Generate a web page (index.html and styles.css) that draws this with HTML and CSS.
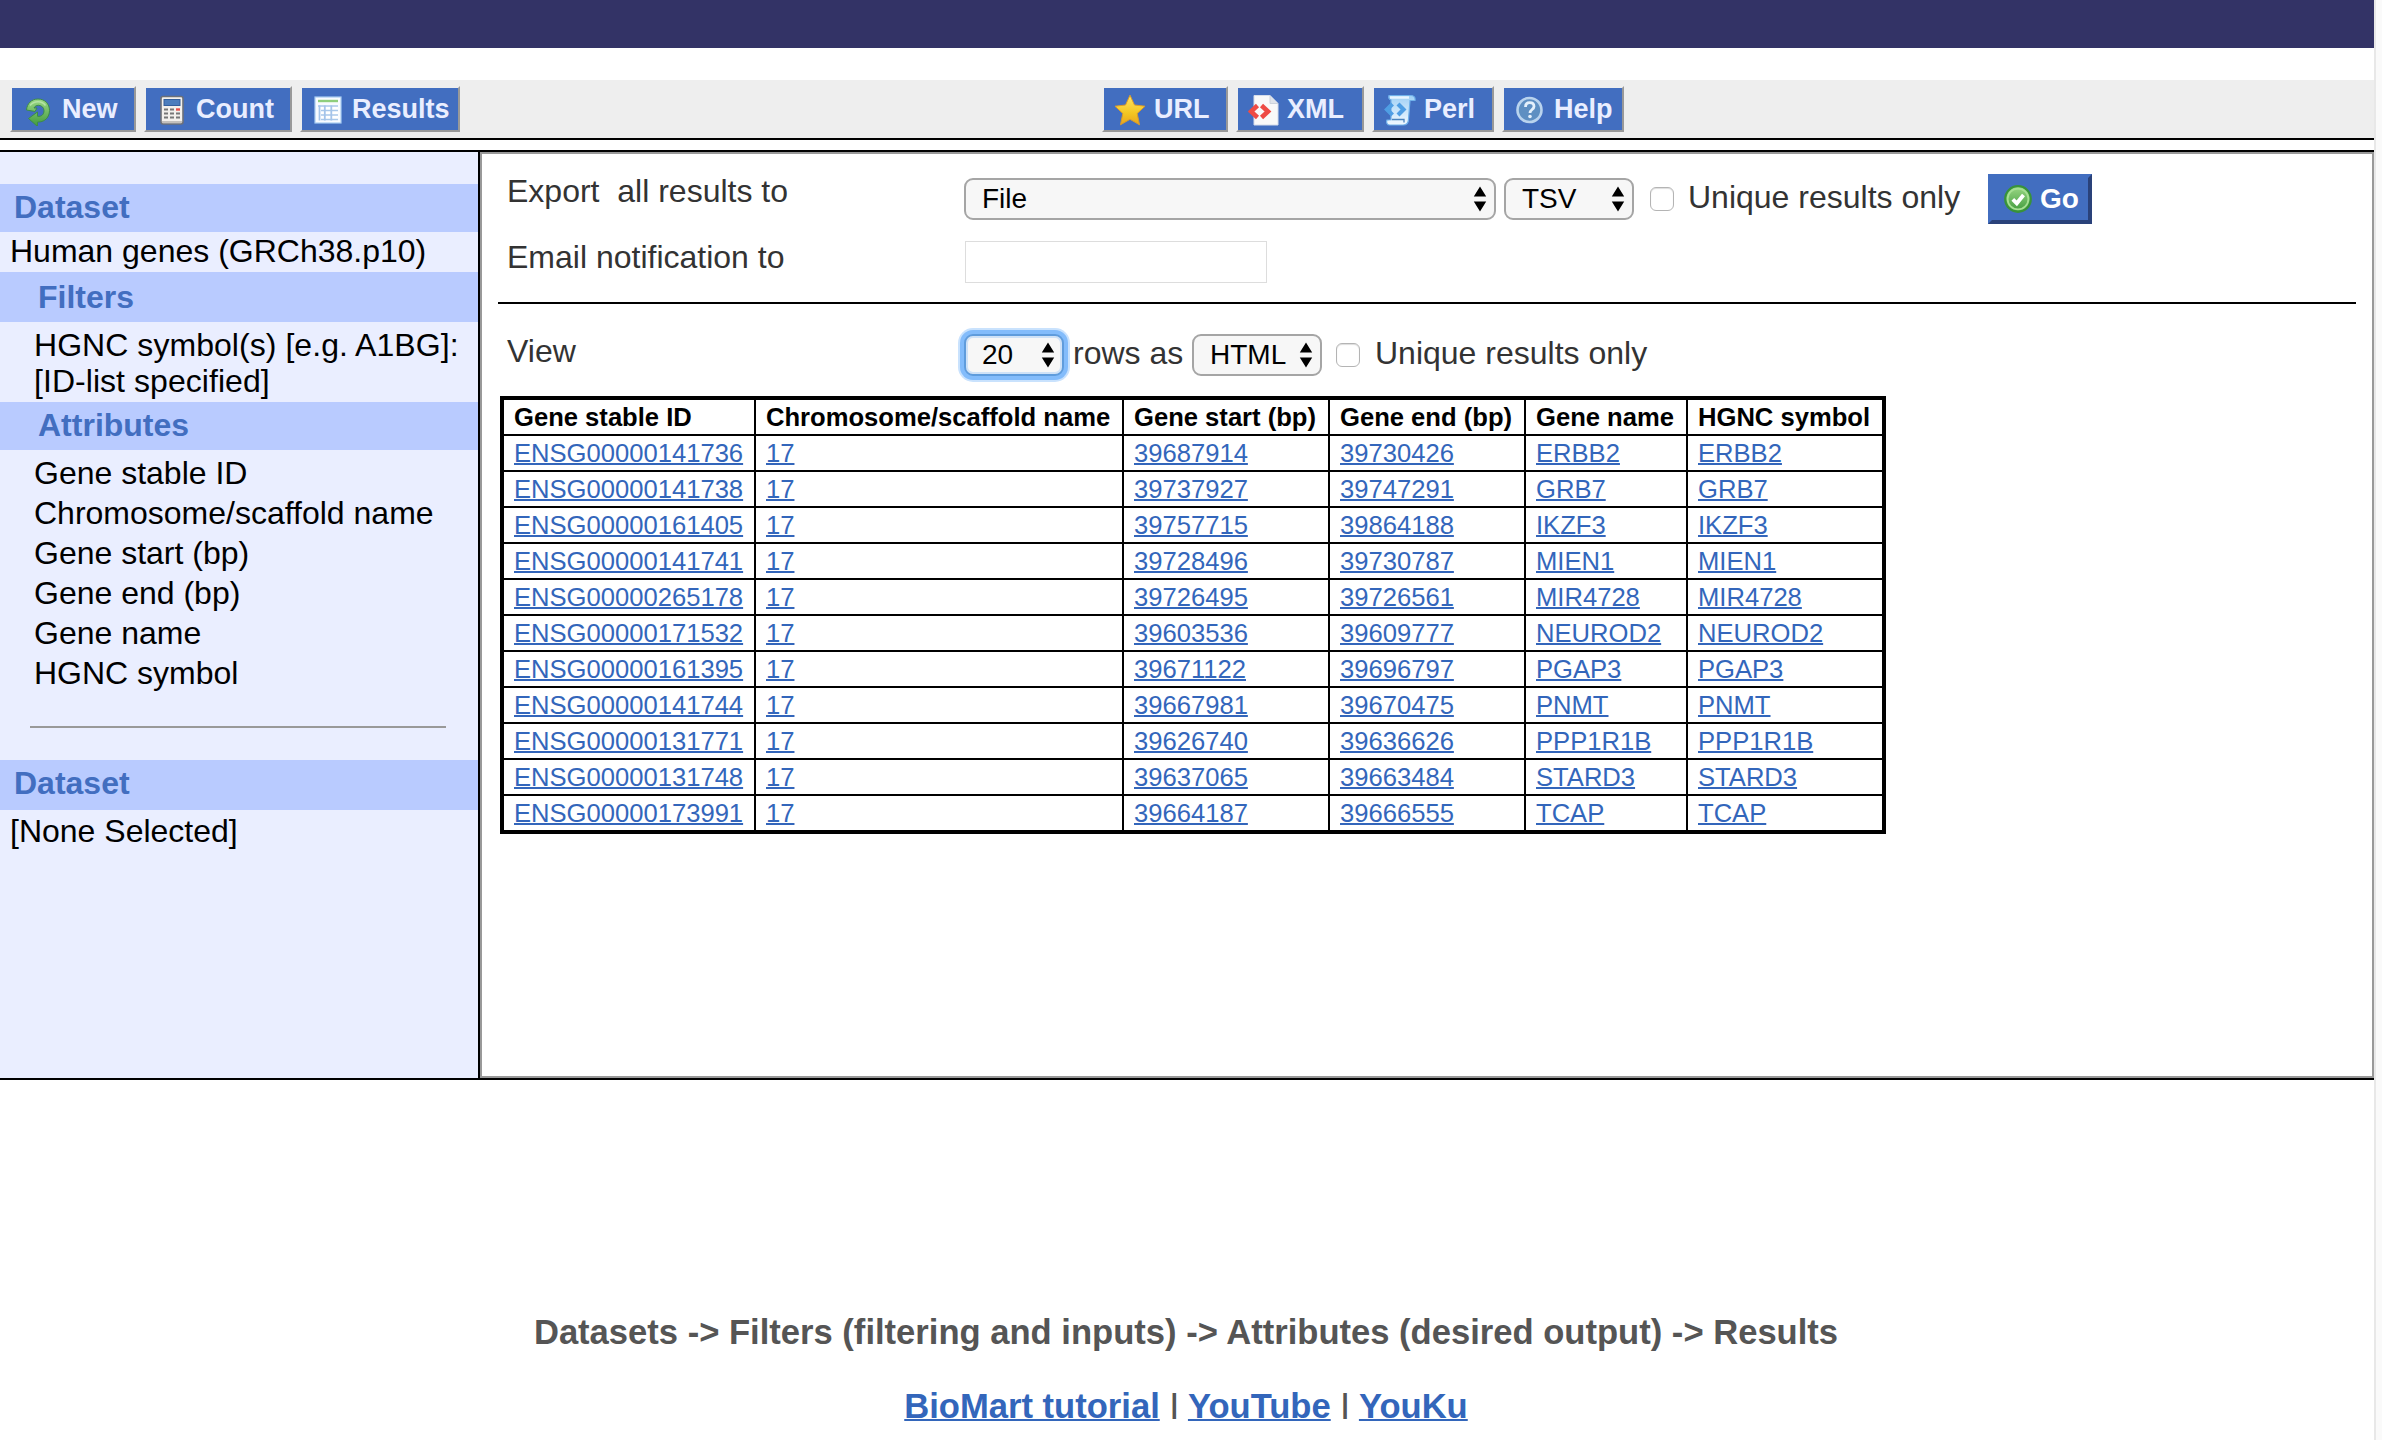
FILE: index.html
```html
<!DOCTYPE html>
<html lang="en">
<head>
<meta charset="utf-8">
<title>BioMart results</title>
<link rel="stylesheet" href="styles.css">
</head>
<body>
<svg class="defs" width="0" height="0" aria-hidden="true">
  <defs>
    <linearGradient id="green" x1="0" y1="0" x2="0" y2="1"><stop offset="0" stop-color="#9bd885"/><stop offset="1" stop-color="#3f9a3c"/></linearGradient>
    <linearGradient id="gold" x1="0" y1="0" x2="0" y2="1"><stop offset="0" stop-color="#ffe566"/><stop offset="0.6" stop-color="#f3c722"/><stop offset="1" stop-color="#e8a41c"/></linearGradient>
    <linearGradient id="scroll" x1="0" y1="0" x2="0" y2="1"><stop offset="0" stop-color="#9fd0f5"/><stop offset="1" stop-color="#f2f9ff"/></linearGradient>
    <symbol id="arrows" viewBox="0 0 14 26"><path d="M7 0.5 13.2 10.5H0.8zM7 25.500 13.200 15.500H0.800z" fill="#000"/></symbol>
  </defs>
</svg>
<div class="page">
  <header class="masthead"></header>
  <nav class="toolbar">
    <div class="group">
      <button class="tool new"><svg class="icon" viewBox="0 0 32 32"><path d="M4.500 16C5 9.500 9.500 5 16 5c7 0 11.500 5 11.500 11.500S23 28 16.500 28l-1 0v4.500L6.500 24.500l9-6.500v4.300c4 .6 6.500-2 6.500-5.500 0-3.200-2.500-5.500-5.500-5.500-2 0-3.700 1-4.500 2.700l3 0-2 3.500z" fill="url(#green)" stroke="#3c8c48" stroke-width="1"/><path d="M8 11.500c4-5 12-5.300 15.500 0" fill="none" stroke="#b5e3a4" stroke-width="1.500"/></svg>New</button>
      <button class="tool count"><svg class="icon" viewBox="0 0 32 32"><rect x="5" y="2.500" width="22" height="27.500" rx="2" fill="#f3f0ec" stroke="#6c7078" stroke-width="1.600"/><rect x="8" y="5.500" width="16" height="6" fill="#4c7dbd" stroke="#345f9c"/><path d="M8 15.500h4M14 15.500h4M8 19.500h4M14 19.500h4M20 19.500h4M8 23.500h4M14 23.500h4M20 23.500h4" stroke="#777" stroke-width="2"/><path d="M20 15.500h4" stroke="#e8504a" stroke-width="2.400"/><path d="M6 28h20" stroke="#b3b1ae" stroke-width="1.500"/></svg>Count</button>
      <button class="tool results"><svg class="icon" viewBox="0 0 32 32"><rect x="3" y="3" width="26" height="26" fill="#f8fbff" stroke="#a9cdf2" stroke-width="1.200"/><path d="M6 7h20" stroke="#8fce7c" stroke-width="2.400"/><path d="M6 11h20v15.500H6z" fill="#fff"/><path d="M6 12h20M9 16.500h17M9 21h17M9 25.500h17" stroke="#a9c8ea" stroke-width="1.500"/><path d="M7.500 11.500v15M12.800 11.500v15M19.300 11.500v15" stroke="#a4c4ea" stroke-width="1.800"/></svg>Results</button>
    </div>
    <div class="group">
      <button class="tool url"><svg class="icon" viewBox="0 0 32 32"><path d="M16 1.200 20.500 11 31 12.200 23.200 19.500 25.500 30.800 16 25.300 6.500 30.800 8.800 19.500 1 12.200 11.500 11z" fill="url(#gold)" stroke="#d99b2b" stroke-width="1" stroke-linejoin="round"/></svg>URL</button>
      <button class="tool xml"><svg class="icon" viewBox="0 0 32 32"><path d="M6 1.500H22L30 9.500V31H6z" fill="#f9f9f9" stroke="#d5dcea" stroke-width="1"/><path d="M22 1.500V9.500H30" fill="#dfe3ea" stroke="#ccd2dc"/><path d="M9.500 11.500 3 17.500l6.500 6M13.500 11.500l6.500 6-6.500 6" fill="none" stroke="#ee4b45" stroke-width="4.600"/></svg>XML</button>
      <button class="tool perl"><svg class="icon" viewBox="0 0 32 32"><path d="M5 1.500H27c3 0 4.500 2 4 5h-5L24.500 25c0 4-2 6-5.500 6H6c-3 0-4-2.500-3-5h4V6C5 5.500 4.200 3.500 5 1.500z" fill="url(#scroll)" stroke="#70b1ea" stroke-width="1.200"/><path d="M6 3.500h19M5 28h14" stroke="#e8f5ff" stroke-width="2.400"/><path d="M8 25.500h12v3" fill="none" stroke="#4a83bd" stroke-width="1.300"/><path d="M8.500 10 3 15.500 8.500 21M14 10l5.500 5.500L14 21" fill="none" stroke="#4f9ee4" stroke-width="4.200"/></svg>Perl</button>
      <button class="tool help"><svg class="icon" viewBox="0 0 32 32"><circle cx="15.500" cy="16" r="12" fill="#5e8fc2" stroke="#b9d3ee" stroke-width="2.600"/><path d="M11.500 13c0-3 1.800-4.300 4.200-4.300 2.500 0 4.300 1.500 4.300 3.800 0 3-4 3-4 6.500" fill="none" stroke="#e4f0fb" stroke-width="2.800"/><circle cx="16" cy="22.500" r="1.800" fill="#e4f0fb"/></svg>Help</button>
    </div>
  </nav>
  <div class="workspace">
    <aside class="sidebar">
      <h2 class="band dataset">Dataset</h2>
      <p class="selected">Human genes (GRCh38.p10)</p>
      <h2 class="band nested tall">Filters</h2>
      <p class="filter">HGNC symbol(s) [e.g. A1BG]:<br>[ID-list specified]</p>
      <h2 class="band nested">Attributes</h2>
      <ul class="attributes">
        <li>Gene stable ID</li>
        <li>Chromosome/scaffold name</li>
        <li>Gene start (bp)</li>
        <li>Gene end (bp)</li>
        <li>Gene name</li>
        <li>HGNC symbol</li>
      </ul>
      <hr class="divider">
      <h2 class="band second">Dataset</h2>
      <p class="selected none">[None Selected]</p>
    </aside>
    <main class="panel">
      <div class="row export">
        <span class="label">Export&nbsp; all results to</span>
        <span class="picker file"><select><option>File</option></select><svg class="arrows"><use href="#arrows"/></svg></span>
        <span class="picker format"><select><option>TSV</option></select><svg class="arrows"><use href="#arrows"/></svg></span>
        <input class="check" type="checkbox">
        <span class="text">Unique results only</span>
        <button class="go"><svg class="icon" viewBox="0 0 32 32"><circle cx="16" cy="16" r="12.800" fill="url(#green)" stroke="#38923a" stroke-width="2.200"/><circle cx="16" cy="16" r="10.400" fill="none" stroke="#a5df92" stroke-width="1.800"/><path d="M10.800 16.300l4 4L21.500 12" fill="none" stroke="#fff" stroke-width="3.800"/></svg>Go</button>
      </div>
      <div class="row email">
        <span class="label">Email notification to</span>
        <input class="address" type="text">
      </div>
      <hr class="rule">
      <div class="row view">
        <span class="label">View</span>
        <span class="picker rows focused"><select><option>20</option></select><svg class="arrows"><use href="#arrows"/></svg></span>
        <span class="text as">rows as</span>
        <span class="picker html"><select><option>HTML</option></select><svg class="arrows"><use href="#arrows"/></svg></span>
        <input class="check" type="checkbox">
        <span class="text">Unique results only</span>
      </div>
      <table class="genes">
        <colgroup><col class="c1"><col class="c2"><col class="c3"><col class="c4"><col class="c5"><col class="c6"></colgroup>
        <thead><tr><th>Gene stable ID</th><th>Chromosome/scaffold name</th><th>Gene start (bp)</th><th>Gene end (bp)</th><th>Gene name</th><th>HGNC symbol</th></tr></thead>
        <tbody>
          <tr><td><a href="#">ENSG00000141736</a></td><td><a href="#">17</a></td><td><a href="#">39687914</a></td><td><a href="#">39730426</a></td><td><a href="#">ERBB2</a></td><td><a href="#">ERBB2</a></td></tr>
          <tr><td><a href="#">ENSG00000141738</a></td><td><a href="#">17</a></td><td><a href="#">39737927</a></td><td><a href="#">39747291</a></td><td><a href="#">GRB7</a></td><td><a href="#">GRB7</a></td></tr>
          <tr><td><a href="#">ENSG00000161405</a></td><td><a href="#">17</a></td><td><a href="#">39757715</a></td><td><a href="#">39864188</a></td><td><a href="#">IKZF3</a></td><td><a href="#">IKZF3</a></td></tr>
          <tr><td><a href="#">ENSG00000141741</a></td><td><a href="#">17</a></td><td><a href="#">39728496</a></td><td><a href="#">39730787</a></td><td><a href="#">MIEN1</a></td><td><a href="#">MIEN1</a></td></tr>
          <tr><td><a href="#">ENSG00000265178</a></td><td><a href="#">17</a></td><td><a href="#">39726495</a></td><td><a href="#">39726561</a></td><td><a href="#">MIR4728</a></td><td><a href="#">MIR4728</a></td></tr>
          <tr><td><a href="#">ENSG00000171532</a></td><td><a href="#">17</a></td><td><a href="#">39603536</a></td><td><a href="#">39609777</a></td><td><a href="#">NEUROD2</a></td><td><a href="#">NEUROD2</a></td></tr>
          <tr><td><a href="#">ENSG00000161395</a></td><td><a href="#">17</a></td><td><a href="#">39671122</a></td><td><a href="#">39696797</a></td><td><a href="#">PGAP3</a></td><td><a href="#">PGAP3</a></td></tr>
          <tr><td><a href="#">ENSG00000141744</a></td><td><a href="#">17</a></td><td><a href="#">39667981</a></td><td><a href="#">39670475</a></td><td><a href="#">PNMT</a></td><td><a href="#">PNMT</a></td></tr>
          <tr><td><a href="#">ENSG00000131771</a></td><td><a href="#">17</a></td><td><a href="#">39626740</a></td><td><a href="#">39636626</a></td><td><a href="#">PPP1R1B</a></td><td><a href="#">PPP1R1B</a></td></tr>
          <tr><td><a href="#">ENSG00000131748</a></td><td><a href="#">17</a></td><td><a href="#">39637065</a></td><td><a href="#">39663484</a></td><td><a href="#">STARD3</a></td><td><a href="#">STARD3</a></td></tr>
          <tr><td><a href="#">ENSG00000173991</a></td><td><a href="#">17</a></td><td><a href="#">39664187</a></td><td><a href="#">39666555</a></td><td><a href="#">TCAP</a></td><td><a href="#">TCAP</a></td></tr>
        </tbody>
      </table>
    </main>
  </div>
  <footer class="footer">
    <p class="steps">Datasets -&gt; Filters (filtering and inputs) -&gt; Attributes (desired output) -&gt; Results</p>
    <p class="links"><a href="#">BioMart tutorial</a> <span class="bar">|</span> <a href="#">YouTube</a> <span class="bar">|</span> <a href="#">YouKu</a></p>
  </footer>
</div>
</body>
</html>
```

FILE: styles.css
```css
* { box-sizing: border-box; }

html { height: 100%; overflow: hidden; }

body {
  margin: 0;
  height: 1440px;
  overflow: hidden;
  background: #fafafa;
  color: #000;
  font: 32px/36px "Liberation Sans", Arial, sans-serif;
}

h2, p, ul { margin: 0; padding: 0; font-size: inherit; }
ul { list-style: none; }
button, select, input { margin: 0; font-family: inherit; border-radius: 0; }
a { color: #3366bb; text-decoration: underline; text-decoration-thickness: 2px; text-decoration-skip-ink: none; }

.defs { position: absolute; }

/* The strip on the right is the window's scrollbar track */
.page {
  width: 2376px;
  height: 1440px;
  background: #fff;
  border-right: 2px solid #e8e8e8;
}

.masthead { height: 48px; background: #333366; }

.toolbar {
  display: flex;
  gap: 642px;
  height: 60px;
  margin-top: 32px;
  padding: 6px 0 0 10px;
  background: #eee;
  border-bottom: 2px solid #000;
}

.group { display: flex; gap: 8px; }

.tool {
  display: flex;
  align-items: center;
  gap: 8px;
  height: 46px;
  padding: 0 0 0 10px;
  border: 2px solid;
  border-color: #eee #999 #999 #eee;
  background: #426ec0;
  color: #eaeeff;
  font-size: 27px;
  font-weight: bold;
  line-height: 40px;
  white-space: nowrap;
}

.icon { flex: none; width: 32px; height: 32px; }
.tool .icon { margin-top: 2px; }
.new { width: 126px; }
.count { width: 148px; }
.results { width: 160px; }
.url { width: 126px; }
.xml { width: 128px; gap: 7px; }
.perl { width: 122px; }
.help { width: 122px; }

.workspace {
  display: flex;
  width: 2374px;
  height: 930px;
  margin-top: 10px;
  border-top: 2px solid #000;
  border-bottom: 2px solid #000;
}

.sidebar {
  flex: none;
  width: 480px;
  padding-top: 32px;
  background: #eaeeff;
  border-right: 2px solid #000;
}

.band {
  height: 48px;
  padding-left: 14px;
  background: #b9cbff;
  color: #426ec0;
  font-weight: bold;
  line-height: 46px;
}
.band.nested { padding-left: 38px; }
.band.tall { height: 50px; line-height: 50px; }
.band.second { height: 50px; }

.selected { height: 40px; padding-left: 10px; line-height: 38px; }
.selected.none { line-height: 42px; }
.filter { padding: 5px 0 3px 34px; white-space: nowrap; }
.filter { letter-spacing: 0.05px; }
.attributes { padding: 3px 0 0 34px; line-height: 40px; }
.divider { width: 416px; height: 2px; margin: 33px 0 32px 30px; border: 0; background: #999; }

.panel {
  flex: 1;
  min-width: 0;
  padding-left: 16px;
  border: 2px solid #999;
}

.row { display: flex; align-items: flex-start; color: #333; white-space: nowrap; }
.label { flex: none; width: 457px; }
.text { line-height: 36px; }

.export { height: 87px; padding: 20px 0 0 9px; }
.export .label { margin-top: -1px; }
.export .picker { margin-top: 4px; }
.export .check { margin: 13px 14px 0 16px; }
.export .text { width: 300px; margin-top: 5px; }

.email { height: 61px; padding-left: 9px; }
.email .label { width: 458px; margin-top: -2px; }
.address { width: 302px; height: 42px; border: 1px solid #ddd; background: #fff; }

.rule { width: 1858px; height: 2px; margin: 0; border: 0; background: #000; }

.view { height: 92px; padding: 30px 0 0 9px; }
.view .label { margin-top: -1px; }
.view .text { margin-top: 1px; }
.view .as { width: 119px; margin-left: 9px; }
.view .check { margin: 9px 15px 0 14px; }

.picker { position: relative; flex: none; height: 42px; }
.picker select {
  appearance: none;
  display: block;
  width: 100%;
  height: 100%;
  padding: 0 0 0 16px;
  border: 2px solid #a5a5a5;
  border-radius: 9px;
  background: #f7f7f7;
  color: #000;
  font-size: 28px;
  line-height: 36px;
}
.arrows { position: absolute; top: 8px; right: 9px; width: 14px; height: 26px; }
.file { width: 532px; }
.format { width: 130px; margin-left: 8px; }
.rows { width: 100px; }
.html { width: 130px; }
.focused select {
  border-color: #5f9cdc;
  box-shadow: 0 0 0 4px #83bcfb, 0 0 0 6px #c9e2fd, inset 0 0 0 2px #cfe2f7;
}

.check {
  appearance: none;
  flex: none;
  width: 24px;
  height: 24px;
  border: 1px solid #b4b4b4;
  border-radius: 6px;
  background: #fff;
  box-shadow: inset 0 1px 1px #ddd;
}

.go {
  display: flex;
  align-items: center;
  gap: 6px;
  width: 104px;
  height: 50px;
  padding: 0 0 0 10px;
  border: 4px solid;
  border-color: #426ec0 #2a427a #2a427a #426ec0;
  background: #426ec0;
  color: #fff;
  font-size: 28px;
  font-weight: bold;
}

.genes {
  width: 1386px;
  margin-left: 2px;
  border: 4px solid #000;
  border-collapse: separate;
  border-spacing: 0;
  table-layout: fixed;
  font-size: 25.6px;
  line-height: 34px;
}
.genes th, .genes td {
  height: 36px;
  padding: 0 0 0 10px;
  border: solid #000;
  border-width: 0 2px 2px 0;
  text-align: left;
  white-space: nowrap;
}
.genes th:last-child, .genes td:last-child { border-right: 0; }
.genes tr:last-child td { height: 34px; border-bottom: 0; }
.c1 { width: 252px; }
.c2 { width: 368px; }
.c3 { width: 206px; }
.c4 { width: 196px; }
.c5 { width: 162px; }
.c6 { width: 194px; }

.footer {
  padding: 234px 2px 0 0;
  color: #555;
  font-size: 34.6px;
  font-weight: bold;
  line-height: 36px;
  text-align: center;
}
.links { margin-top: 38px; }
.bar { display: inline-block; width: 9.6px; font-size: 27px; line-height: 30px; vertical-align: 5px; }
```
